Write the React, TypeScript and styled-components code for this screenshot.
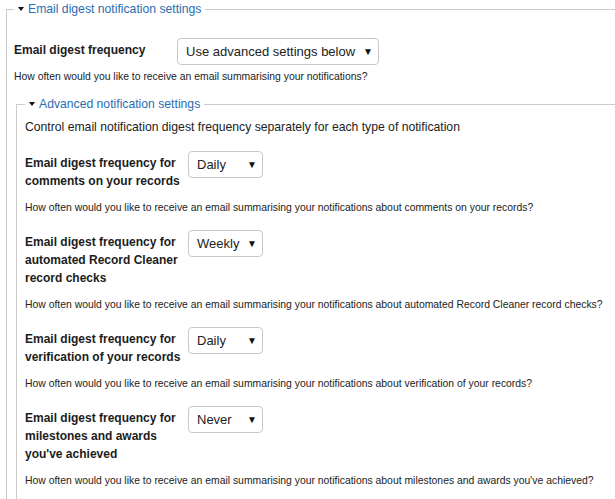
import React from "react";
import styled, { createGlobalStyle } from "styled-components";

const GlobalStyle = createGlobalStyle`
  body {
    margin: 0;
    background: #fff;
    overflow: hidden;
    font-family: "Liberation Sans", Arial, sans-serif;
    color: #222;
  }
`;

const SCFieldset = styled.fieldset<{ $inner?: boolean }>`
  margin: ${(props) => (props.$inner ? "12px 0 0 2px" : "0 0 0 6px")};
  padding: ${(props) => (props.$inner ? "5px 0 20px 8px" : "20px 0 20px 7px")};
  border: 1px solid #ccc;
  width: 700px;
  min-width: 0;
`;

const SCLegend = styled.legend`
  display: flex;
  align-items: center;
  gap: 4px;
  padding: 0 4px;
  font-size: 12.2px;
  line-height: 18px;
  color: #2a6db0;
  cursor: pointer;
`;

const SCCaret = styled.span`
  width: 0;
  height: 0;
  border-left: 3.5px solid transparent;
  border-right: 3.5px solid transparent;
  border-top: 4px solid #111;
`;

const SCIntro = styled.p`
  margin: 0 0 15px;
  font-size: 12.2px;
  line-height: 18px;
  color: #222;
`;

const SCSetting = styled.div<{ $gap: number }>`
  margin-bottom: ${(props) => props.$gap}px;
`;

const SCRow = styled.div`
  display: flex;
  align-items: flex-start;
`;

const SCLabel = styled.label`
  box-sizing: border-box;
  width: 163px;
  flex: none;
  padding: 3px 5px 7px 0;
  font-size: 12px;
  font-weight: bold;
  line-height: 18px;
  color: #1c1c1c;
`;

const SCSelect = styled.div<{ $width: number }>`
  box-sizing: border-box;
  width: ${(props) => props.$width}px;
  height: 27px;
  display: flex;
  align-items: center;
  justify-content: space-between;
  padding: 0 5px 0 8px;
  border: 1px solid #c8c8c8;
  border-radius: 4px;
  background: #fff;
  font-size: 13px;
  color: #222;
`;

const SCArrow = styled.span`
  font-size: 10px;
  color: #111;
`;

const SCHelp = styled.div`
  margin-top: 5px;
  font-size: 10.4px;
  line-height: 12px;
  color: #222;
`;

type SettingProps = {
  label: string;
  value: string;
  help: string;
  width: number;
  gap: number;
};

function Setting({ label, value, help, width, gap }: SettingProps) {
  return (
    <SCSetting $gap={gap}>
      <SCRow>
        <SCLabel>{label}</SCLabel>
        <SCSelect $width={width}>
          <span>{value}</span>
          <SCArrow>▼</SCArrow>
        </SCSelect>
      </SCRow>
      <SCHelp>{help}</SCHelp>
    </SCSetting>
  );
}

const ask = "How often would you like to receive an email summarising your notifications";

const advanced = [
  { label: "Email digest frequency for comments on your records", value: "Daily", about: "comments on your records" },
  {
    label: "Email digest frequency for automated Record Cleaner record checks",
    value: "Weekly",
    about: "automated Record Cleaner record checks",
  },
  { label: "Email digest frequency for verification of your records", value: "Daily", about: "verification of your records" },
  {
    label: "Email digest frequency for milestones and awards you've achieved",
    value: "Never",
    about: "milestones and awards you've achieved",
  },
];

export default function App() {
  return (
    <>
      <GlobalStyle />
      <SCFieldset>
        <SCLegend>
          <SCCaret />
          Email digest notification settings
        </SCLegend>
        <Setting
          label="Email digest frequency"
          value="Use advanced settings below"
          help={`${ask}?`}
          width={202}
          gap={0}
        />
        <SCFieldset $inner>
          <SCLegend>
            <SCCaret />
            Advanced notification settings
          </SCLegend>
          <SCIntro>Control email notification digest frequency separately for each type of notification</SCIntro>
          {advanced.map((item) => (
            <Setting
              key={item.about}
              label={item.label}
              value={item.value}
              help={`${ask} about ${item.about}?`}
              width={75}
              gap={16}
            />
          ))}
        </SCFieldset>
      </SCFieldset>
    </>
  );
}
